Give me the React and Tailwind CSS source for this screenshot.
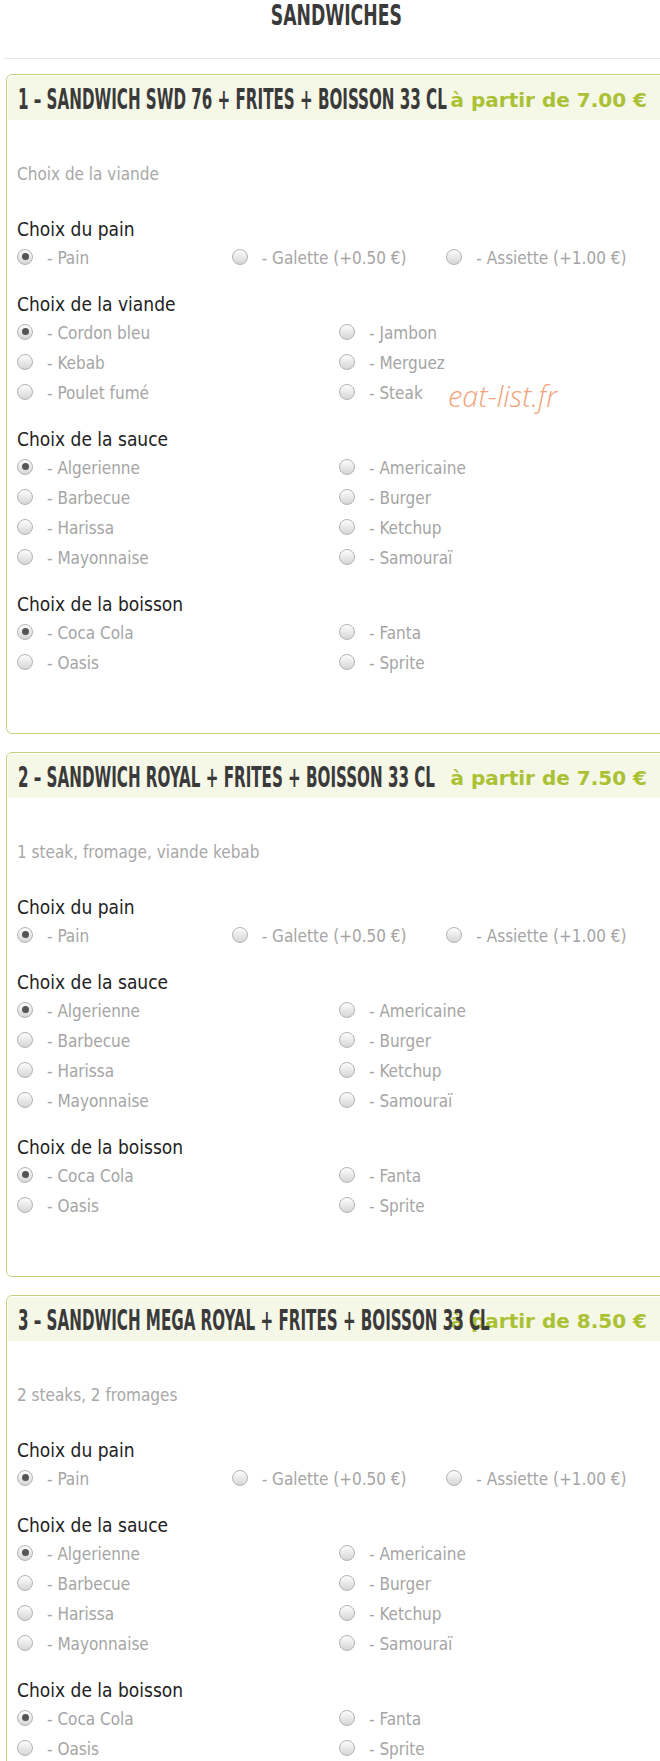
const body = "font-['DejaVu_Sans_Condensed','DejaVu_Sans',sans-serif]";
const condensed = "font-['DejaVu_Sans_Condensed','DejaVu_Sans',sans-serif]";

const pain = {
  title: "Choix du pain",
  cols: 3,
  options: ["Pain", "Galette (+0.50 €)", "Assiette (+1.00 €)"],
};
const viande = {
  title: "Choix de la viande",
  cols: 2,
  options: ["Cordon bleu", "Jambon", "Kebab", "Merguez", "Poulet fumé", "Steak"],
};
const sauce = {
  title: "Choix de la sauce",
  cols: 2,
  options: ["Algerienne", "Americaine", "Barbecue", "Burger", "Harissa", "Ketchup", "Mayonnaise", "Samouraï"],
};
const boisson = {
  title: "Choix de la boisson",
  cols: 2,
  options: ["Coca Cola", "Fanta", "Oasis", "Sprite"],
};

const menus = [
  {
    title: "1 – SANDWICH SWD 76 + FRITES + BOISSON 33 CL",
    price: "à partir de 7.00 €",
    desc: "Choix de la viande",
    sections: [pain, viande, sauce, boisson],
  },
  {
    title: "2 – SANDWICH ROYAL + FRITES + BOISSON 33 CL",
    price: "à partir de 7.50 €",
    desc: "1 steak, fromage, viande kebab",
    sections: [pain, sauce, boisson],
  },
  {
    title: "3 – SANDWICH MEGA ROYAL + FRITES + BOISSON 33 CL",
    price: "à partir de 8.50 €",
    desc: "2 steaks, 2 fromages",
    sections: [pain, sauce, boisson],
  },
];

function Radio({ checked }) {
  return (
    <span className="-mt-[5px] flex h-[16px] w-[16px] shrink-0 items-center justify-center rounded-full border border-[#b3b3b3] bg-linear-to-b from-[#fdfdfd] to-[#d6d6d6]">
      {checked && <span className="h-[7px] w-[7px] rounded-full bg-[#555]" />}
    </span>
  );
}

function Section({ section }) {
  return (
    <div>
      <div className="flex h-[30px] items-center text-[19px] text-[#222]">{section.title}</div>
      <div className={section.cols === 3 ? "grid grid-cols-3" : "grid grid-cols-2"}>
        {section.options.map((opt, i) => (
          <label key={opt} className="flex h-[30px] items-center">
            <Radio checked={i === 0} />
            <span className="ml-[14px] text-[17px] text-[#a5a5a5]">- {opt}</span>
          </label>
        ))}
      </div>
    </div>
  );
}

function MenuCard({ menu }) {
  return (
    <div className="w-[666px] rounded-[6px] border border-[#c9cf7c] px-[1px] pt-[1px] pb-[54px]">
      <div className="grid h-[44px] grid-cols-[minmax(0,1fr)] items-center bg-[#f5f7e7] pl-[10px] pr-[23px]">
        <div className={`col-start-1 row-start-1 min-w-0 whitespace-nowrap ${condensed}`}>
          <span className="inline-block origin-left scale-x-[0.58] text-[29px] font-bold leading-[44px] text-[#3a3a3a]">
            {menu.title}
          </span>
        </div>
        <div className="col-start-1 row-start-1 justify-self-end whitespace-nowrap pt-[2px] font-['DejaVu_Sans',sans-serif] text-[20px] font-bold leading-[44px] text-[#abc134]">
          {menu.price}
        </div>
      </div>
      <div className="px-[9px] pt-[44px]">
        <div className="h-[20px] text-[17px] leading-[20px] text-[#a8a8a8]">{menu.desc}</div>
        <div className="mt-[30px] flex flex-col gap-[15px]">
          {menu.sections.map((s) => (
            <Section key={s.title} section={s} />
          ))}
        </div>
      </div>
    </div>
  );
}

export default function App() {
  return (
    <div className={`relative h-[1761px] w-[660px] overflow-hidden bg-white ${body}`}>
      <div className="ml-[4px] w-[664px]">
        <div className={`h-[30px] text-center ${condensed}`}>
          <span className="inline-block scale-x-[0.66] text-[29px] font-bold leading-[30px] text-[#3a3a3a]">SANDWICHES</span>
        </div>
        <div className="mt-[28px] border-t border-[#e6e6e6]" />
        <div className="ml-[2px] mt-[15px] flex flex-col gap-[18px]">
          {menus.map((m) => (
            <MenuCard key={m.title} menu={m} />
          ))}
        </div>
      </div>
      <div className="pointer-events-none absolute left-[448px] top-[374px] font-['Open_Sans',sans-serif] text-[29px] font-light italic text-[#f0a47c]">
        eat-list.fr
      </div>
    </div>
  );
}
